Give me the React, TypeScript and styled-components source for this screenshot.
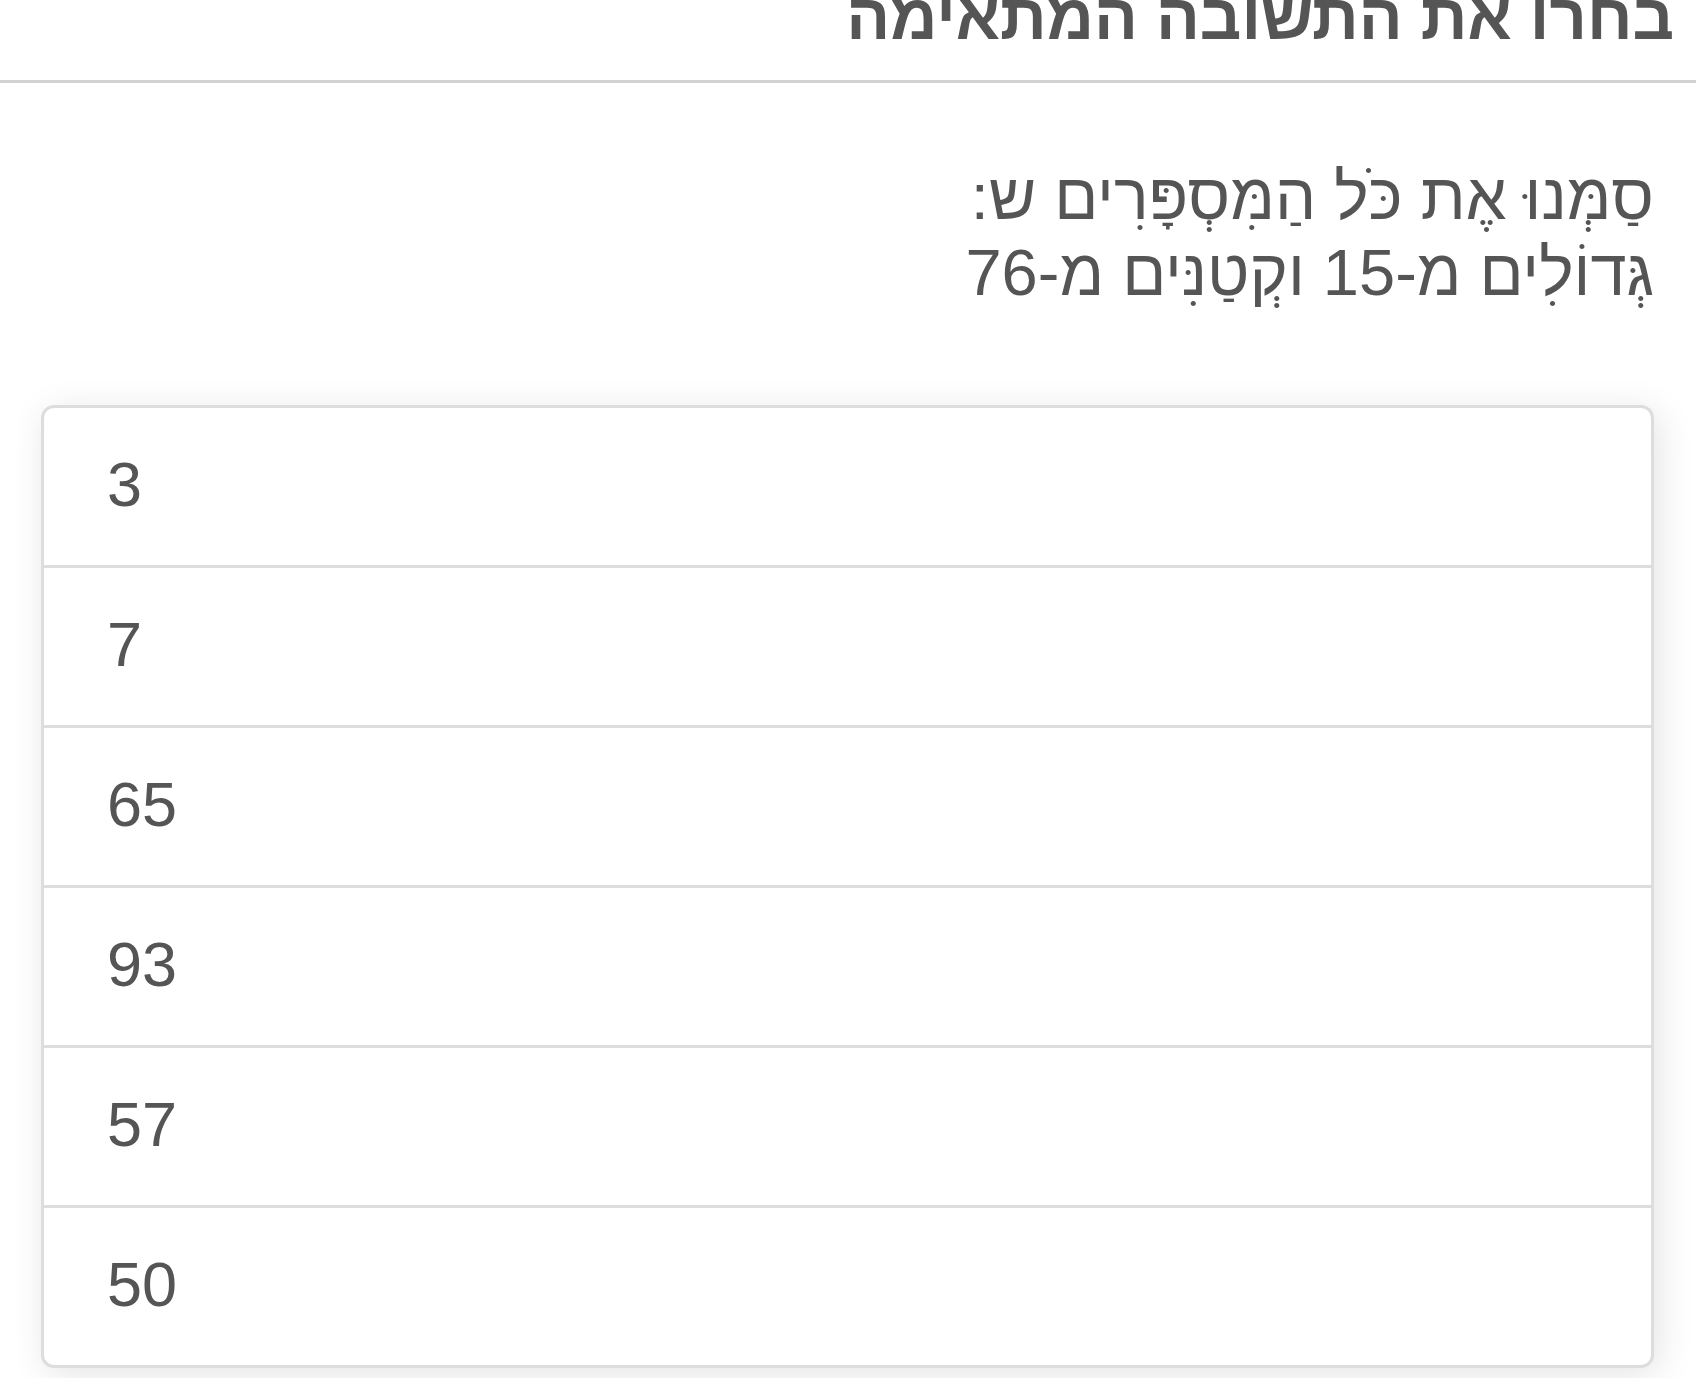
import React from 'react';
import styled, { createGlobalStyle } from 'styled-components';

const GlobalStyle = createGlobalStyle`
  html, body {
    margin: 0;
    padding: 0;
    background: #ffffff;
  }

  body {
    font-family: "Liberation Sans", "DejaVu Sans", Arial, sans-serif;
    direction: rtl;
    color: #555555;
    overflow: hidden;
  }
`;

const Page = styled.div`
  min-height: 100vh;
  display: flex;
  flex-direction: column;
`;

const Header = styled.header`
  margin-top: -26px;
  padding: 0 22px 20px;
  border-bottom: 3px solid #d2d2d2;
`;

const Title = styled.h1`
  margin: 0;
  font-size: 65px;
  line-height: 86px;
  font-weight: 700;
  color: #555555;
`;

const Content = styled.main`
  padding: 76px 42px 0 41px;
`;

const Prompt = styled.p`
  margin: 0;
  font-size: 65px;
  line-height: 76px;
  color: #555555;
`;

const OptionList = styled.ul`
  list-style: none;
  margin: 94px 0 0;
  padding: 0;
  border: 3px solid #dddddd;
  border-radius: 13px;
  background: #ffffff;
  box-shadow: 5px 6px 36px rgba(0, 0, 0, 0.11);
  overflow: hidden;
  direction: ltr;
`;

const Option = styled.li`
  display: flex;
  align-items: center;
  height: 151px;
  padding: 0 0 6px 63px;
  font-size: 63px;
  color: #555555;
  border-bottom: 3px solid #dddddd;

  &:last-child {
    border-bottom: none;
  }
`;

const options = [3, 7, 65, 93, 57, 50];

const App: React.FC = () => {
  return (
    <Page>
      <GlobalStyle />
      <Header>
        <Title>בחרו את התשובה המתאימה</Title>
      </Header>
      <Content>
        <Prompt>
          סַמְּנוּ אֶת כֹּל הַמִּסְפָּרִים ש:
          <br />
          גְּדוֹלִים מ-15 וקְטַנִּים מ-76
        </Prompt>
        <OptionList>
          {options.map((n) => (
            <Option key={n}>{n}</Option>
          ))}
        </OptionList>
      </Content>
    </Page>
  );
};

export default App;
